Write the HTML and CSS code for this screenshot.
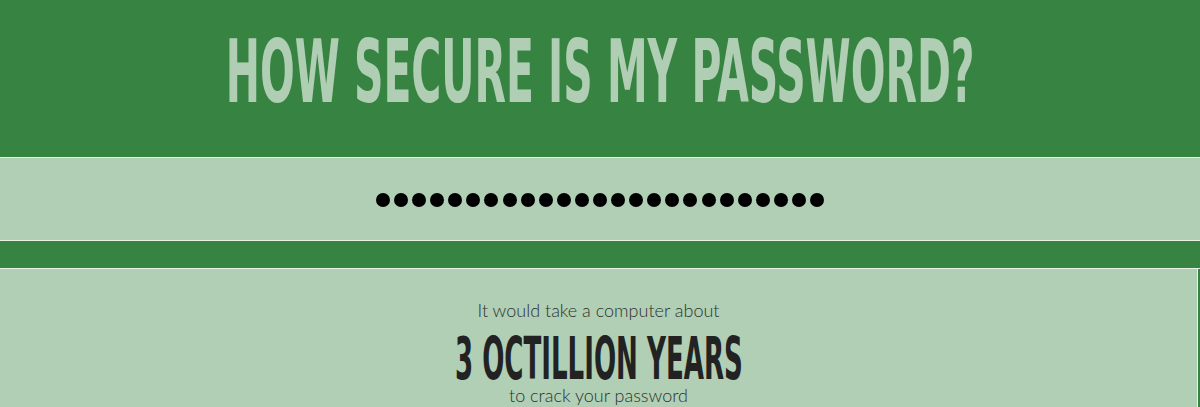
FILE: index.html
```html
<!DOCTYPE html>
<html lang="en">
<head>
    <meta charset="UTF-8">
    <title>How Secure Is My Password?</title>
    <link rel="stylesheet" href="styles.css">
</head>
<body>
    <header class="cabecera">
        <h1><span class="titulo">How secure is my password?</span></h1>
    </header>

    <div class="entrada">
        <div class="puntos" aria-label="password">
            <span></span><span></span><span></span><span></span><span></span>
            <span></span><span></span><span></span><span></span><span></span>
            <span></span><span></span><span></span><span></span><span></span>
            <span></span><span></span><span></span><span></span><span></span>
            <span></span><span></span><span></span><span></span><span></span>
        </div>
    </div>

    <div class="separador"></div>

    <div class="resultado">
        <p class="linea">It would take a computer about</p>
        <p class="tiempo"><span class="titulo">3 octillion years</span></p>
        <p class="linea">to crack your password</p>
    </div>
</body>
</html>
```

FILE: styles.css
```css
body {
    margin: 0;
    background-color: #378341;
    font-family: "Liberation Sans", Arial, sans-serif;
    overflow: hidden;
}
.cabecera {
    height: 157px;
    background: #378341;
    border-bottom: 1px solid #e6f1e7;
    display: flex;
    justify-content: center;
    overflow: hidden;
}
h1 {
    margin: 0;
    padding-top: 22px;
    font-family: "DejaVu Sans Condensed", "DejaVu Sans", sans-serif;
    font-stretch: condensed;
    font-weight: bold;
    font-size: 87px;
    line-height: 100px;
    color: #afceb4;
    text-transform: uppercase;
    white-space: nowrap;
}
.titulo {
    display: inline-block;
    transform: scaleX(0.522);
}
.entrada {
    height: 82px;
    background: #b0cfb5;
    border-bottom: 1px solid #e6f1e7;
    display: flex;
    align-items: center;
    justify-content: center;
}
.puntos {
    display: flex;
    gap: 4.1px;
    margin-top: 2px;
}
.puntos span {
    width: 14px;
    height: 14px;
    border-radius: 50%;
    background: #000;
}
.separador {
    height: 27px;
    background: #378341;
    border-bottom: 1px solid #e6f1e7;
}
.resultado {
    box-sizing: border-box;
    width: 1198px;
    height: 140px;
    background: #b0cfb5;
    border-right: 1px solid #e6f1e7;
    text-align: center;
    color: #2f2f2f;
    padding-top: 31px;
    overflow: hidden;
}
.linea {
    margin: 0;
    font-family: Lato, "Liberation Sans", sans-serif;
    font-weight: 300;
    font-size: 18px;
    line-height: 20px;
}
.tiempo {
    margin: 13px 0 0;
    font-family: "DejaVu Sans Condensed", "DejaVu Sans", sans-serif;
    font-stretch: condensed;
    font-weight: bold;
    font-size: 58px;
    line-height: 52px;
    color: #222;
    text-transform: uppercase;
    white-space: nowrap;
}
.tiempo .titulo {
    transform: scaleX(0.5);
}
```
